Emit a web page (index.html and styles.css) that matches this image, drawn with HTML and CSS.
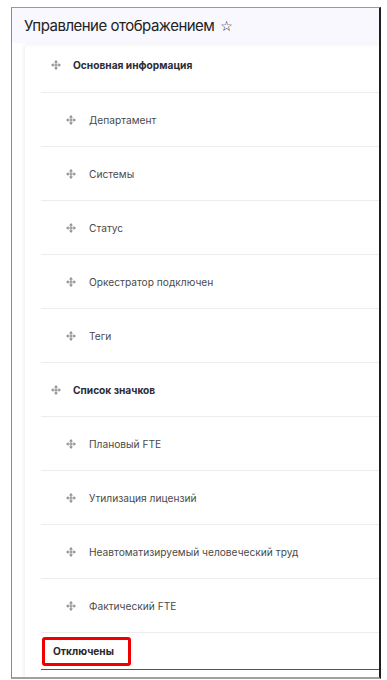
FILE: index.html
```html
<!DOCTYPE html>
<html lang="ru">
<head>
  <meta charset="UTF-8" />
  <meta name="viewport" content="width=device-width, initial-scale=1.0" />
  <title>Управление отображением</title>
  <link rel="stylesheet" href="styles.css">
</head>
<body>
  <svg width="0" height="0" class="defs">
    <symbol id="move" viewBox="0 0 12 12">
      <path d="M6 0 L8.4 2.9 H3.6 Z M6 12 L8.4 9.1 H3.6 Z M0 6 L2.9 3.6 V8.4 Z M12 6 L9.1 3.6 V8.4 Z" fill="currentColor"/>
      <path d="M6 2 V10 M2 6 H10" stroke="currentColor" stroke-width="1.4"/>
    </symbol>
  </svg>

  <div class="frame">
    <div class="header">
      <h1>Управление отображением <span class="star">☆</span></h1>
    </div>
    <div class="panel">
      <ul class="list">
        <li class="row first group"><svg class="icon"><use href="#move"/></svg>Основная информация</li>
        <li class="row sub"><svg class="icon"><use href="#move"/></svg>Департамент</li>
        <li class="row sub"><svg class="icon"><use href="#move"/></svg>Системы</li>
        <li class="row sub"><svg class="icon"><use href="#move"/></svg>Статус</li>
        <li class="row sub"><svg class="icon"><use href="#move"/></svg>Оркестратор подключен</li>
        <li class="row sub"><svg class="icon"><use href="#move"/></svg>Теги</li>
        <li class="row group"><svg class="icon"><use href="#move"/></svg>Список значков</li>
        <li class="row sub"><svg class="icon"><use href="#move"/></svg>Плановый FTE</li>
        <li class="row sub"><svg class="icon"><use href="#move"/></svg>Утилизация лицензий</li>
        <li class="row sub"><svg class="icon"><use href="#move"/></svg>Неавтоматизируемый человеческий труд</li>
        <li class="row sub"><svg class="icon"><use href="#move"/></svg>Фактический FTE</li>
        <li class="row disabled"><span class="mark">Отключены</span></li>
      </ul>
    </div>
  </div>
</body>
</html>
```

FILE: styles.css
```css
* {
  box-sizing: border-box;
}
body {
  margin: 0;
  background: #fff;
  font-family: Inter, 'Noto Sans', sans-serif;
  color: #333;
}
.defs {
  position: absolute;
}
.frame {
  margin: 7px 0 0 11px;
  width: 370px;
  height: 672px;
  border-top: 1px solid #9a9a9a;
  border-left: 1px solid #8a8a8a;
  border-right: 2px solid #1e1e1e;
  border-bottom: 2px solid #a0a0a0;
  overflow: hidden;
}
.header {
  background: #f9f8fe;
  height: 35px;
  padding-left: 12px;
  display: flex;
  align-items: center;
}
h1 {
  margin: 0;
  font-size: 15px;
  font-weight: 400;
  color: #222;
  letter-spacing: -0.5px;
}
.star {
  font-family: 'DejaVu Sans', sans-serif;
  font-size: 14px;
  margin-left: 2px;
}
.panel {
  margin-left: 13px;
  background: #fff;
  box-shadow: -1px 2px 4px rgba(0, 0, 0, 0.08), inset 0 6px 6px -6px rgba(0, 0, 0, 0.08);
  height: 100%;
}
.list {
  list-style: none;
  margin: 0 0 0 16px;
  padding: 0;
}
.row {
  height: 54px;
  display: flex;
  align-items: center;
  border-bottom: 1px solid #ececec;
  font-size: 10.2px;
  color: #444;
}
.row.first {
  height: 50px;
  padding-bottom: 5px;
}
.icon {
  width: 10px;
  height: 10px;
  color: #909090;
  flex-shrink: 0;
}
.group {
  padding-left: 10px;
  font-weight: 700;
  color: #2c2c38;
}
.group .icon {
  margin-right: 12px;
}
.sub {
  padding-left: 25px;
  color: #4a4a4a;
}
.sub .icon {
  margin-right: 13px;
}
.disabled {
  height: 37px;
  border-bottom: 1px solid #555;
  padding-left: 1px;
}
.mark {
  display: flex;
  align-items: center;
  height: 29px;
  width: 89px;
  padding-left: 8px;
  border: 3px solid #ee0000;
  border-radius: 3px;
  font-size: 10.2px;
  font-weight: 700;
  color: #2a2a2a;
}
```
